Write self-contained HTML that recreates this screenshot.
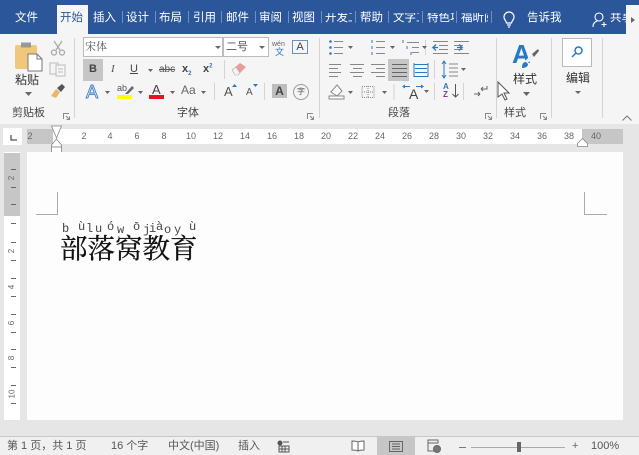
<!DOCTYPE html>
<html><head><meta charset="utf-8"><style>
html,body{margin:0;padding:0}
body{width:639px;height:455px;overflow:hidden;position:relative;background:#e6e6e6;font-family:"Liberation Sans","Noto Sans CJK SC",sans-serif;color:#444}
div,span{position:absolute}
.t{white-space:nowrap;line-height:1;font-size:11px}
.tab{color:#fff;top:13px;font-size:11.5px;line-height:1;white-space:nowrap}
.sep{position:absolute;top:11px;width:1px;height:12px;background:#6f8fbd}
.v{position:absolute;width:1px;background:#d4d4d4}
.rn{position:absolute;top:132px;font-size:9px;line-height:1;color:#666;transform:translateX(-50%)}
svg{position:absolute;overflow:visible}
</style></head><body>
<div style="left:0;top:0;width:639px;height:34px;background:#2b579a"></div>
<div style="left:57px;top:5px;width:31px;height:29px;background:#f5f5f5"></div>
<div class="tab" style="left:15px">文件</div>
<div class="tab" style="left:60px;color:#2b579a">开始</div>
<div class="tab" style="left:93px">插入</div><div class="sep" style="left:122px"></div>
<div class="tab" style="left:126px">设计</div><div class="sep" style="left:155px"></div>
<div class="tab" style="left:159px">布局</div><div class="sep" style="left:188px"></div>
<div class="tab" style="left:193px">引用</div><div class="sep" style="left:221px"></div>
<div class="tab" style="left:226px">邮件</div><div class="sep" style="left:255px"></div>
<div class="tab" style="left:259px">审阅</div><div class="sep" style="left:288px"></div>
<div class="tab" style="left:292px">视图</div><div class="sep" style="left:321px"></div>
<div class="tab" style="left:325px;width:27px;overflow:hidden">开发工</div><div class="sep" style="left:355px"></div>
<div class="tab" style="left:360px">帮助</div><div class="sep" style="left:388px"></div>
<div class="tab" style="left:393px;width:26px;overflow:hidden">文字工</div><div class="sep" style="left:422px"></div>
<div class="tab" style="left:427px;width:27px;overflow:hidden">特色功</div><div class="sep" style="left:456px"></div>
<div class="tab" style="left:461px;width:27px;overflow:hidden">福昕阅</div><div class="sep" style="left:491px"></div>
<svg style="left:502px;top:12px" width="14" height="16" viewBox="0 0 14 16" fill="none" stroke="#fff" stroke-width="1.2"><path d="M4.5 11c0-2-2.5-3-2.5-6a5 5 0 0 1 10 0c0 3-2.500 4-2.500 6zM5 13h4M6 15h2"/></svg>
<div class="tab" style="left:527px">告诉我</div>
<svg style="left:592px;top:12px" width="16" height="16" viewBox="0 0 16 16" fill="none" stroke="#fff" stroke-width="1.100"><circle cx="7" cy="5" r="4"/><path d="M1 15c0-4 2-5 4-6M12 10v5M9.500 12.500h5"/></svg>
<div class="tab" style="left:610px;width:16px;overflow:hidden">共享</div>
<div style="left:626px;top:5px;width:13px;height:29px;background:#f5f5f5"></div>
<svg style="left:631px;top:17px" width="5" height="6"><path d="M0 0l4 3-4 3z" fill="#666"/></svg>

<div style="left:0;top:34px;width:639px;height:90px;background:#f5f5f5"></div>
<div class="v" style="left:74px;top:38px;height:80px"></div>
<div class="v" style="left:319px;top:38px;height:80px"></div>
<div class="v" style="left:496px;top:38px;height:80px"></div>
<div class="v" style="left:551px;top:38px;height:80px"></div>
<div class="v" style="left:602px;top:38px;height:80px"></div>
<div class="v" style="left:425px;top:40px;height:15px"></div>

<!-- clipboard -->
<svg style="left:14px;top:41px" width="30" height="30" viewBox="0 0 30 30"><rect x="1" y="4" width="22" height="24" rx="2" fill="#f0c87c"/><rect x="7" y="1.500" width="10" height="5" fill="#999"/><path d="M14 13h9l5 5v12H14z" fill="#fff" stroke="#777"/><path d="M23 13v5h5" fill="none" stroke="#777"/></svg>
<div class="t" style="left:15px;top:74px;font-size:12px;color:#333">粘贴</div>
<svg style="left:25px;top:92px" width="7" height="4"><path d="M0 0h7L3.500 4z" fill="#666"/></svg>
<svg style="left:50px;top:40px" width="16" height="16" viewBox="0 0 16 16" fill="none" stroke="#aaa" stroke-width="1.300"><path d="M4 1l6 9M12 1L6 10"/><circle cx="4" cy="12.500" r="2.500"/><circle cx="12" cy="12.500" r="2.500"/></svg>
<svg style="left:49px;top:62px" width="17" height="15" viewBox="0 0 17 15" fill="#f5f5f5" stroke="#bbb"><rect x="1" y="1" width="8" height="11"/><rect x="7" y="3" width="9" height="11"/><path d="M9 7h5M9 10h5"/></svg>
<svg style="left:50px;top:83px" width="16" height="15" viewBox="0 0 16 15"><path d="M1 13l5-7 4 3-4 6z" fill="#e8b864"/><path d="M7 5l5-4 3 3-4 5z" fill="#555"/></svg>
<div class="t" style="left:12px;top:108px;color:#444">剪贴板</div>
<svg style="left:63px;top:113px" width="7" height="7" fill="none" stroke="#888"><path d="M.5 6V.5H6M3 3l3.500 3.500M6.500 3.500v3h-3"/></svg>

<!-- font -->
<div style="left:83px;top:37px;width:140px;height:20px;background:#fff;border:1px solid #bbb;box-sizing:border-box"></div>
<div class="t" style="left:85px;top:42px;font-family:'Liberation Serif','Noto Serif CJK SC',serif;color:#555">宋体</div>
<svg style="left:215px;top:46px" width="6" height="3"><path d="M0 0h6L3 3z" fill="#666"/></svg>
<div style="left:223px;top:37px;width:46px;height:20px;background:#fff;border:1px solid #bbb;box-sizing:border-box"></div>
<div class="t" style="left:226px;top:42px;color:#555">二号</div>
<svg style="left:259px;top:46px" width="6" height="3"><path d="M0 0h6L3 3z" fill="#666"/></svg>
<div class="t" style="left:272px;top:41px;font-size:7px;color:#666">wén</div>
<div class="t" style="left:275px;top:48px;font-size:9px;color:#2b79c2">文</div>
<div style="left:292px;top:40px;width:16px;height:14px;border:1px solid #6d90b8;box-sizing:border-box;font-size:11px;line-height:12px;text-align:center;color:#444">A</div>

<div style="left:83px;top:59px;width:20px;height:22px;background:#c6c6c6"></div>
<div class="t" style="left:89px;top:64px;font-weight:bold;color:#444">B</div>
<div class="t" style="left:111px;top:64px;font-family:'Liberation Serif',serif;font-style:italic;color:#555">I</div>
<div class="t" style="left:130px;top:64px;text-decoration:underline;color:#444">U</div>
<svg style="left:148px;top:69px" width="5" height="3"><path d="M0 0h5L2.500 3z" fill="#666"/></svg>
<div class="t" style="left:159px;top:65px;font-size:10px;text-decoration:line-through;color:#555">abc</div>
<div class="t" style="left:182px;top:64px;font-weight:bold;color:#444">x<sub style="font-size:6px;color:#2b79c2">2</sub></div>
<div class="t" style="left:203px;top:64px;font-weight:bold;color:#444">x<sup style="font-size:6px;color:#2b79c2;line-height:0">2</sup></div>
<div class="v" style="left:224px;top:60px;height:19px"></div>
<svg style="left:231px;top:62px" width="16" height="14" viewBox="0 0 16 14"><path d="M1 8l8-7 6 4-8 8H4z" fill="#ef9a9a"/><path d="M1 8l3 5h3l2-2-4-6z" fill="#f3f3f3" stroke="#aaa" stroke-width=".6"/></svg>

<div class="t" style="left:86px;top:83px;font-size:18px;color:#fff;-webkit-text-stroke:1px #4a86c8">A</div>
<svg style="left:105px;top:91px" width="5" height="3"><path d="M0 0h5L2.500 3z" fill="#666"/></svg>
<div class="t" style="left:117px;top:84px;font-size:9px;color:#555">ab</div>
<svg style="left:124px;top:85px" width="10" height="10"><path d="M1 9L8 1l2 2-6 6z" fill="#666"/></svg>
<div style="left:117px;top:95px;width:15px;height:4px;background:#ff0"></div>
<svg style="left:138px;top:91px" width="5" height="3"><path d="M0 0h5L2.500 3z" fill="#666"/></svg>
<div class="t" style="left:152px;top:83px;font-size:13px;color:#444">A</div>
<div style="left:149px;top:95px;width:15px;height:4px;background:#e81123"></div>
<svg style="left:170px;top:91px" width="5" height="3"><path d="M0 0h5L2.500 3z" fill="#666"/></svg>
<div class="t" style="left:181px;top:84px;font-size:12px;color:#666">Aa</div>
<svg style="left:201px;top:91px" width="5" height="3"><path d="M0 0h5L2.500 3z" fill="#666"/></svg>
<div class="v" style="left:214px;top:83px;height:17px"></div>
<div class="t" style="left:224px;top:85px;font-size:13px;color:#555">A</div>
<svg style="left:232px;top:84px" width="5" height="3"><path d="M0 3L2.500 0 5 3z" fill="#2b79c2"/></svg>
<div class="t" style="left:246px;top:88px;font-size:10px;color:#555">A</div>
<svg style="left:253px;top:84px" width="5" height="3"><path d="M0 0h5L2.500 3z" fill="#2b79c2"/></svg>
<div class="v" style="left:264px;top:83px;height:17px"></div>
<div style="left:272px;top:84px;width:15px;height:14px;background:#bdbdbd;font-size:12px;line-height:14px;text-align:center;font-weight:bold;color:#444">A</div>
<div style="left:293px;top:84px;width:14px;height:14px;border:1px solid #999;border-radius:50%;font-size:8px;line-height:14px;text-align:center;color:#555">字</div>
<div class="t" style="left:177px;top:108px;color:#444">字体</div>
<svg style="left:307px;top:113px" width="7" height="7" fill="none" stroke="#888"><path d="M.5 6V.5H6M3 3l3.500 3.500M6.500 3.500v3h-3"/></svg>

<!-- paragraph -->
<svg style="left:328px;top:39px" width="160" height="17" viewBox="0 0 160 17" fill="none" stroke="#888">
<path d="M6 2.500h9M6 8.500h9M6 14.500h9M48 2.500h9M48 8.500h9M48 14.500h9M79 3.500h12M84 8.500h7M84 13.500h7"/>
<circle cx="2.500" cy="2.500" r="1.300" fill="#2b79c2" stroke="none"/><circle cx="2.500" cy="8.500" r="1.300" fill="#2b79c2" stroke="none"/><circle cx="2.500" cy="14.500" r="1.300" fill="#2b79c2" stroke="none"/>
<path d="M44 1v3M44 7v3M44 13v3" stroke="#2b79c2"/>
<path d="M75 1v3M79 7v3M83 13v3" stroke="#2b79c2"/>
<path d="M20 7h5l-2.500 3zM62 7h5l-2.500 3zM94 7h5l-2.500 3z" fill="#666" stroke="none"/>
<path d="M105 2.500h15M111 6.500h9M111 10.500h9M105 14.500h15M126 2.500h15M126 6.500h9M126 10.500h9M126 14.500h15"/>
<path d="M110 8.500h-5l3-3M105 8.500l3 3M129 8.500h5l-3-3M134 8.500l-3 3" stroke="#2b79c2" stroke-width="1.300"/>
</svg>
<svg style="left:328px;top:62px" width="120" height="16" viewBox="0 0 120 16" fill="none" stroke="#888">
<path d="M1 2.500h12M1 6.500h9M1 10.500h12M1 14.500h9M22 2.500h14M25 6.500h9M22 10.500h14M25 14.500h9M43 2.500h14M48 6.500h9M43 10.500h14M48 14.500h9"/>
</svg>
<div style="left:388px;top:59px;width:21px;height:22px;background:#c6c6c6"></div>
<svg style="left:390px;top:62px" width="40" height="16" viewBox="0 0 40 16" fill="none" stroke="#666">
<path d="M2 2.500h15M2 6.500h15M2 10.500h15M2 14.500h15"/>
<path d="M24 1v14M38 1v14M24 2.500h14M24 14.500h14M25 6.500h12M25 10.500h12" stroke="#2b79c2"/></svg>
<div class="v" style="left:434px;top:60px;height:19px"></div>
<svg style="left:441px;top:60px" width="26" height="19" viewBox="0 0 26 19" fill="none"><path d="M3 2v15M1 4l2-3 2 3M1 15l2 3 2-3" stroke="#2b79c2"/><path d="M8 4h9M8 8h9M8 12h9M8 16h9" stroke="#888"/><path d="M20 8h5l-2.500 3z" fill="#666"/></svg>
<svg style="left:328px;top:83px" width="150" height="17" viewBox="0 0 150 17" fill="none" stroke="#888">
<path d="M3 9l6-7 5 6-5 5z" fill="#fff"/><rect x="1" y="13" width="15" height="3" fill="#fff"/>
<path d="M20 8h5l-2.500 3z" fill="#666" stroke="none"/>
<rect x="34" y="3.500" width="12" height="11" stroke-dasharray="1 1"/><path d="M34 9h12M40 3v11" stroke-dasharray="1 1"/>
<path d="M54 8h5l-2.500 3z" fill="#666" stroke="none"/>
<path d="M66 1v16" stroke="#d4d4d4"/>
</svg>
<div class="t" style="left:409px;top:87px;font-size:14px;color:#444">A</div>
<svg style="left:402px;top:84px" width="22" height="5"><path d="M0 2.500l3-2v4zM22 2.500l-3-2v4z" fill="#2b79c2"/><path d="M3 2.500h5M14 2.500h5" stroke="#2b79c2"/></svg>
<svg style="left:424px;top:90px" width="5" height="3"><path d="M0 0h5L2.500 3z" fill="#666"/></svg>
<div class="v" style="left:434px;top:83px;height:17px"></div>
<div class="t" style="left:443px;top:83px;font-size:8px;font-weight:bold;color:#2b79c2">A</div>
<div class="t" style="left:443px;top:91px;font-size:8px;font-weight:bold;color:#7b3f98">Z</div>
<svg style="left:452px;top:84px" width="7" height="14" fill="none" stroke="#555"><path d="M3.500 0v13M.5 10l3 3 3-3"/></svg>
<div class="v" style="left:463px;top:83px;height:17px"></div>
<svg style="left:473px;top:85px" width="16" height="13" fill="none" stroke="#666"><path d="M8 4h6V1M8 4l2-2M8 4l2 2M1 9h6M7 9l-2-2M7 9l-2 2"/></svg>
<div class="t" style="left:388px;top:108px;color:#444">段落</div>
<svg style="left:485px;top:113px" width="7" height="7" fill="none" stroke="#888"><path d="M.5 6V.5H6M3 3l3.500 3.500M6.500 3.500v3h-3"/></svg>

<!-- styles -->
<div class="t" style="left:512px;top:41px;font-size:26px;font-weight:bold;color:#2b79c2">A</div>
<svg style="left:522px;top:49px" width="18" height="20" viewBox="0 0 18 20"><path d="M2 13l9-9 2 2-8 9z" fill="#eee"/><path d="M10 5l6-5 1 2-5 6z" fill="#666"/><path d="M0 19c0-4 1-6 4-6l2 2c0 3-3 4-6 4z" fill="#2b79c2"/></svg>
<div class="t" style="left:513px;top:73px;font-size:12px;color:#333">样式</div>
<svg style="left:523px;top:92px" width="7" height="4"><path d="M0 0h7L3.500 4z" fill="#666"/></svg>
<div class="t" style="left:504px;top:108px;color:#444">样式</div>
<svg style="left:540px;top:113px" width="7" height="7" fill="none" stroke="#888"><path d="M.5 6V.5H6M3 3l3.500 3.500M6.500 3.500v3h-3"/></svg>
<svg style="left:497px;top:81px" width="16" height="20" viewBox="0 0 16 20"><path d="M1 1v15l4-3 3 6 2-1-3-6h5z" fill="#fff" stroke="#555"/></svg>

<!-- edit -->
<div style="left:562px;top:38px;width:30px;height:29px;background:#fff;border:1px solid #bbb;box-sizing:border-box"></div>
<svg style="left:570px;top:45px" width="14" height="14" fill="none" stroke="#2b79c2" stroke-width="1.500"><circle cx="8.500" cy="5.500" r="3.500"/><path d="M6 8l-4 4"/></svg>
<div class="t" style="left:566px;top:72px;font-size:12px;color:#333">编辑</div>
<svg style="left:575px;top:91px" width="6" height="3"><path d="M0 0h6L3 3z" fill="#666"/></svg>
<svg style="left:622px;top:115px" width="10" height="6" fill="none" stroke="#777"><path d="M.5 5.500L5 1l4.500 4.500"/></svg>

<!-- ruler -->
<div style="left:0;top:124px;width:639px;height:28px;background:#e6e6e6"></div>
<div style="left:3px;top:128px;width:19px;height:17px;background:#fff"></div>
<svg style="left:10px;top:135px" width="7" height="6" fill="none" stroke="#555" stroke-width="1.300"><path d="M1 0v5h6"/></svg>
<div style="left:27px;top:129px;width:596px;height:15px;background:#fff"></div>
<div style="left:27px;top:129px;width:26px;height:15px;background:#c6c6c6"></div>
<div style="left:582px;top:129px;width:41px;height:15px;background:#c6c6c6"></div>
<div class="rn" style="left:30px;">2</div>
<div class="rn" style="left:84px">2</div><div class="rn" style="left:110px">4</div><div class="rn" style="left:137px">6</div><div class="rn" style="left:164px">8</div><div class="rn" style="left:191px">10</div><div class="rn" style="left:218px">12</div><div class="rn" style="left:245px">14</div><div class="rn" style="left:272px">16</div><div class="rn" style="left:299px">18</div><div class="rn" style="left:326px">20</div><div class="rn" style="left:353px">22</div><div class="rn" style="left:380px">24</div><div class="rn" style="left:407px">26</div><div class="rn" style="left:434px">28</div><div class="rn" style="left:461px">30</div><div class="rn" style="left:488px">32</div><div class="rn" style="left:515px">34</div><div class="rn" style="left:542px">36</div><div class="rn" style="left:569px">38</div><div class="rn" style="left:596px">40</div>
<svg style="left:51px;top:125px" width="11" height="28" viewBox="0 0 11 28" fill="#fff" stroke="#888" stroke-width=".8"><path d="M.5 1h10L5.500 13z"/><path d="M5.500 14l5 6v2H.5v-2z"/><rect x=".5" y="22" width="10" height="5.500"/></svg>
<svg style="left:577px;top:138px" width="11" height="9" fill="#fff" stroke="#888" stroke-width=".8"><path d="M5.500 .5l5 5v3H.5v-3z"/></svg>

<!-- vertical ruler -->
<div style="left:4px;top:152px;width:16px;height:268px;background:#fff"></div>
<div style="left:4px;top:153px;width:16px;height:63px;background:#c6c6c6"></div>
<svg style="left:4px;top:152px" width="16" height="268" stroke="#666">
<path d="M7 17.500h5M7 35.500h5M7 52.500h5M7 71.500h5M7 90.500h5M7 108.500h5M7 126.500h5M7 144.500h5M7 162.500h5M7 180.500h5M7 197.500h5M7 215.500h5M7 233.500h5M7 251.500h5"/>
</svg>
<div style="left:10px;top:152px;width:9px;font-size:8px;color:#666;line-height:1">
<span style="top:22px;left:0;transform:rotate(-90deg)">2</span>
<span style="top:95px;left:0;transform:rotate(-90deg)">2</span>
<span style="top:131px;left:0;transform:rotate(-90deg)">4</span>
<span style="top:167px;left:0;transform:rotate(-90deg)">6</span>
<span style="top:202px;left:0;transform:rotate(-90deg)">8</span>
<span style="top:238px;left:-2px;transform:rotate(-90deg)">10</span>
</div>

<!-- page -->
<div style="left:27px;top:152px;width:596px;height:268px;background:#fdfdfd"></div>
<svg style="left:27px;top:152px" width="596" height="70" fill="none" stroke="#aaa">
<path d="M30.500 40v22.500H9M557.500 40v22.500H580"/></svg>
<div style="left:60px;top:222px;font-family:'Liberation Mono',monospace;font-size:12px;line-height:1;color:#444;white-space:nowrap">
<span style="left:2px;top:1px">b</span><span style="left:18px;top:-1px">ù</span><span style="left:26px;top:1px">l</span><span style="left:35px;top:1px">u</span><span style="left:47px;top:-1px">ó</span><span style="left:57px;top:2px">w</span><span style="left:73px;top:-1px">ō</span><span style="left:83px;top:2px">j</span><span style="left:89px;top:1px">i</span><span style="left:96px;top:-1px">à</span><span style="left:104px;top:2px">o</span><span style="left:114px;top:2px">y</span><span style="left:129px;top:-1px">ù</span>
</div>
<div style="left:60px;top:235px;font-family:'Liberation Serif','Noto Serif CJK SC',serif;font-size:27.500px;line-height:1;color:#111;-webkit-text-stroke:.3px #111;white-space:nowrap">部落窝教育</div>

<!-- status -->
<div style="left:0;top:436px;width:639px;height:19px;background:#f0f0f0"></div>
<div style="left:0;top:436px;width:639px;height:1px;background:#c8c8c8"></div>
<div class="t" style="left:7px;top:441px;color:#555">第 1 页，共 1 页</div>
<div class="t" style="left:111px;top:441px;color:#555">16 个字</div>
<div class="t" style="left:168px;top:441px;color:#555">中文(中国)</div>
<div class="t" style="left:238px;top:441px;color:#555">插入</div>
<svg style="left:277px;top:440px" width="13" height="13" fill="none" stroke="#555"><circle cx="3" cy="3" r="2" fill="#555"/><path d="M6 2h6M2 6h10v6H2zM5 6v6M8 6v6M2 9h10"/></svg>
<svg style="left:351px;top:440px" width="14" height="12" fill="#fff" stroke="#666"><path d="M7 2C5 1 3 1 1 1v9c2 0 4 0 6 1 2-1 4-1 6-1V1c-2 0-4 0-6 1zM7 2v9"/></svg>
<div style="left:377px;top:436px;width:38px;height:19px;background:#c6c6c6"></div>
<svg style="left:389px;top:441px" width="14" height="11" fill="none" stroke="#666"><rect x=".5" y=".5" width="13" height="10"/><path d="M3 3h8M3 5.500h8M3 8h8"/></svg>
<svg style="left:427px;top:439px" width="15" height="14" fill="none" stroke="#666"><path d="M1 1h10v3H1zM1 4v8h6"/><circle cx="10" cy="10" r="3.500" fill="#777"/></svg>
<div style="left:459px;top:447px;width:7px;height:1px;background:#777"></div>
<div style="left:471px;top:447px;width:94px;height:1px;background:#aaa"></div>
<div style="left:517px;top:442px;width:4px;height:10px;background:#666"></div>
<div class="t" style="left:572px;top:441px;color:#666">+</div>
<div class="t" style="left:591px;top:441px;color:#555">100%</div>
</body></html>
